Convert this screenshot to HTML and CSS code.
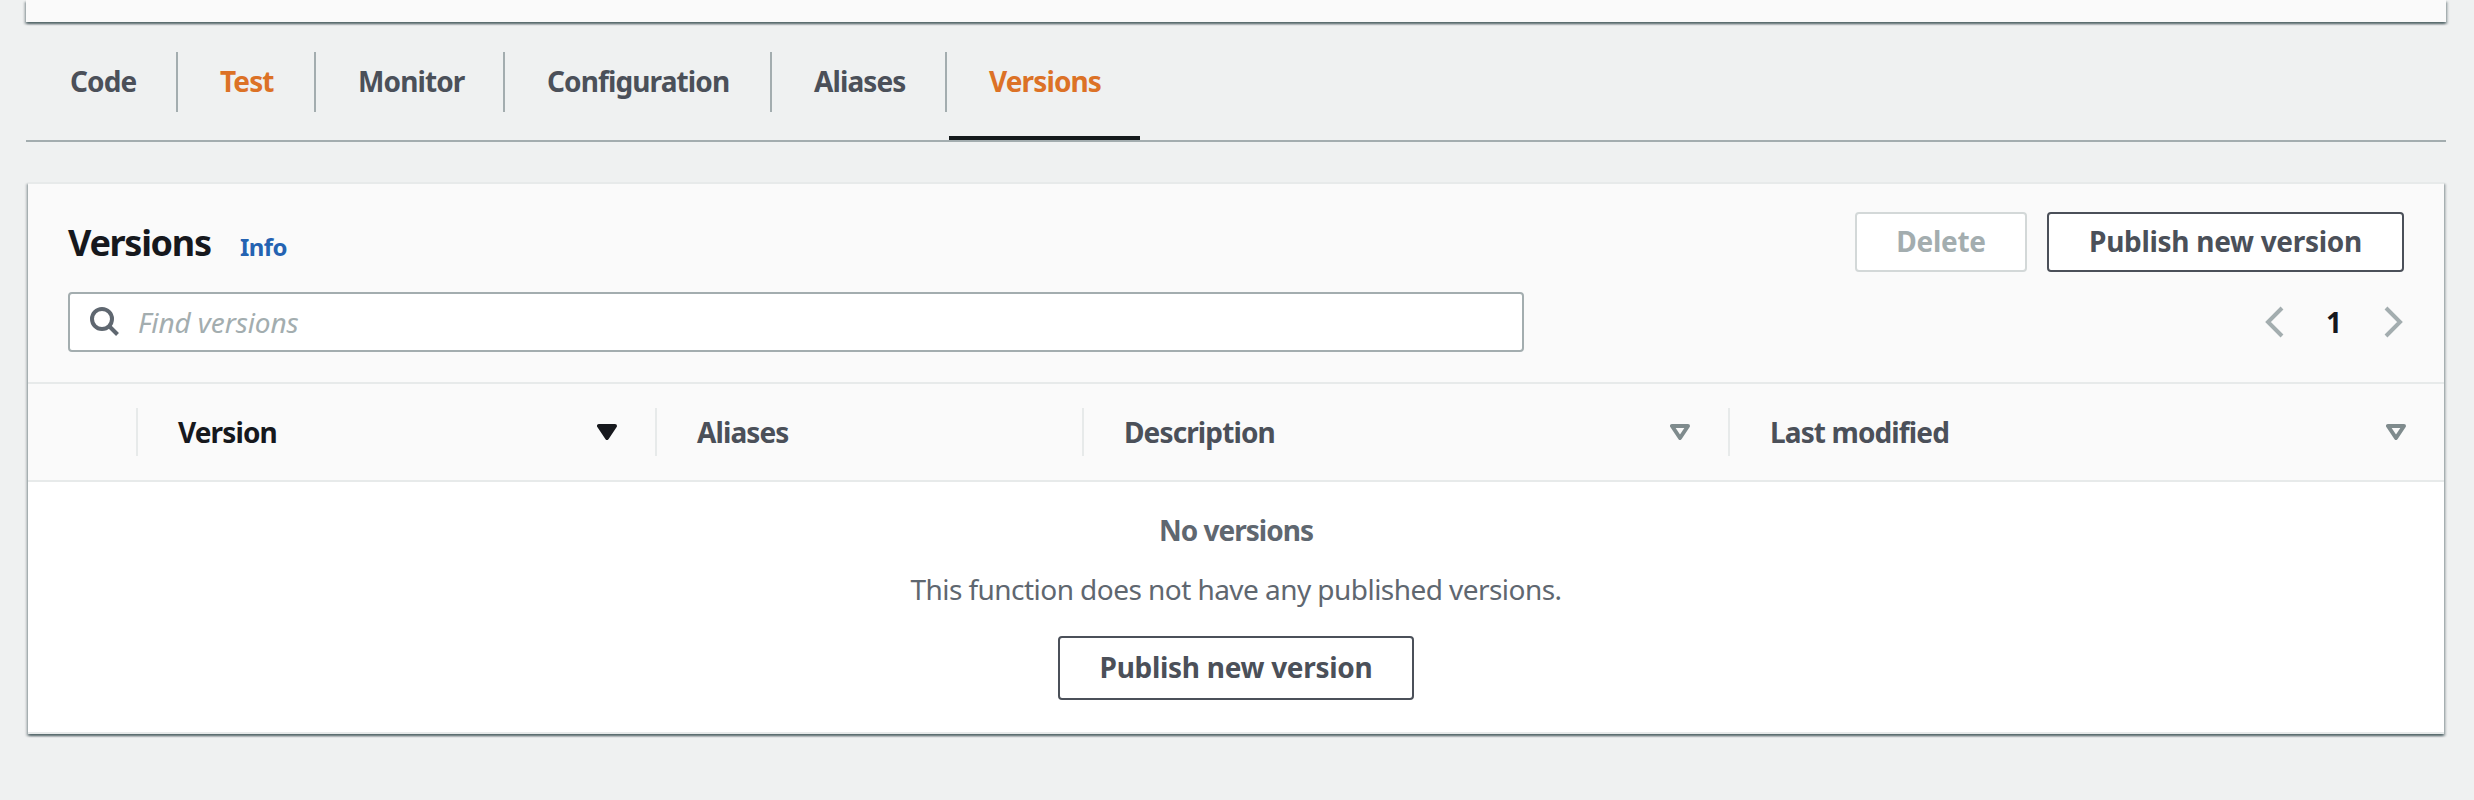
FILE: index.html
```html
<!DOCTYPE html>
<html lang="en">
<head>
<meta charset="utf-8">
<title>Versions</title>
<link rel="stylesheet" href="styles.css">
</head>
<body>
<div class="overview"></div>
<nav class="tabs">
  <a class="tab tab-code"><span>Code</span></a>
  <a class="tab tab-test"><span>Test</span></a>
  <a class="tab tab-monitor"><span>Monitor</span></a>
  <a class="tab tab-config"><span>Configuration</span></a>
  <a class="tab tab-aliases"><span>Aliases</span></a>
  <a class="tab tab-versions"><span>Versions</span></a>
</nav>
<main class="card">
  <header class="card-header">
    <div class="title-row">
      <h1>Versions</h1>
      <a class="info">Info</a>
      <div class="actions">
        <button class="btn btn-disabled">Delete</button>
        <button class="btn btn-publish">Publish new version</button>
      </div>
    </div>
    <div class="filter-row">
      <div class="search">
        <svg class="search-icon" width="32" height="32" viewBox="0 0 32 32"><circle cx="14" cy="13" r="10" fill="none" stroke="currentColor" stroke-width="4"/><path d="M21 20l8.500 8.500" fill="none" stroke="currentColor" stroke-width="4"/></svg>
        <span>Find versions</span>
      </div>
      <div class="pagination">
        <svg width="20" height="32" viewBox="0 0 20 32"><path d="M17 2L3 16l14 14" fill="none" stroke="currentColor" stroke-width="4"/></svg>
        <span class="page">1</span>
        <svg width="20" height="32" viewBox="0 0 20 32"><path d="M3 2l14 14L3 30" fill="none" stroke="currentColor" stroke-width="4"/></svg>
      </div>
    </div>
  </header>
  <div class="columns">
    <div class="col"></div>
    <div class="col col-sorted"><span>Version</span><svg class="sort" width="20" height="16" viewBox="0 0 20 16"><path d="M2 2h16l-8 12z" fill="currentColor" stroke="currentColor" stroke-width="4" stroke-linejoin="round"/></svg></div>
    <div class="col"><span>Aliases</span></div>
    <div class="col"><span>Description</span><svg class="sort" width="20" height="16" viewBox="0 0 20 16"><path d="M2 2h16l-8 12z" fill="none" stroke="currentColor" stroke-width="4" stroke-linejoin="round"/></svg></div>
    <div class="col col-last"><span>Last modified</span><svg class="sort" width="20" height="16" viewBox="0 0 20 16"><path d="M2 2h16l-8 12z" fill="none" stroke="currentColor" stroke-width="4" stroke-linejoin="round"/></svg></div>
  </div>
  <section class="empty">
    <strong>No versions</strong>
    <p>This function does not have any published versions.</p>
    <button class="btn btn-empty">Publish new version</button>
  </section>
</main>
</body>
</html>
```
FILE: styles.css
```css
* {
  box-sizing: border-box;
}

body {
  margin: 0;
  height: 800px;
  overflow: hidden;
  background: #eff1f1;
  color: #4b5059;
  font: 28px/44px "Noto Sans", sans-serif;
}

.overview {
  height: 22px;
  margin: 0 28px 0 26px;
  background: #fafafa;
}

.overview,
.card {
  box-shadow: 0 2px 2px rgba(0, 28, 36, .45), 2px 2px 2px rgba(0, 28, 36, .2), -2px 2px 2px rgba(0, 28, 36, .2);
}

/* Tab bar */
.tabs {
  display: flex;
  height: 120px;
  margin: 0 28px 40px 26px;
  padding-top: 30px;
  border-bottom: 2px solid #a3adaf;
}

.tab span {
  display: block;
  height: 60px;
  padding-left: 42px;
  border-right: 2px solid #a3adaf;
  font-weight: 700;
  line-height: 59px;
  letter-spacing: -.88px;
  white-space: nowrap;
}

.tab-code { width: 152px; }
.tab-code span { padding-left: 44px; }
.tab-test { width: 138px; }
.tab-monitor { width: 189px; }
.tab-config { width: 267px; }
.tab-aliases { width: 175px; }
.tab-versions {
  width: 191px;
  margin-left: 2px;
  border-bottom: 4px solid #151a1c;
}
.tab-versions span {
  padding-left: 40px;
  border-right: 0;
}
.tab-test,
.tab-versions {
  color: #dc7226;
}

/* Versions card */
.card {
  height: 552px;
  margin: 0 30px 0 28px;
  background: #fff;
  border-top: 2px solid #e7eaea;
  border-bottom: 2px solid #e7eaea;
}

.card-header {
  height: 200px;
  padding: 28px 40px 0;
  background: #fafafa;
  border-bottom: 2px solid #e7eaea;
}

.title-row {
  display: flex;
  height: 60px;
  align-items: baseline;
}

h1 {
  width: 172px;
  margin: 0;
  color: #16181d;
  font-size: 36px;
  line-height: 61px;
  letter-spacing: -1.3px;
}

.info {
  color: #2463b2;
  font-size: 24px;
  font-weight: 700;
  letter-spacing: -.6px;
}

.actions {
  display: flex;
  align-self: flex-start;
  gap: 20px;
  margin-left: auto;
}

.btn {
  height: 60px;
  padding: 0 0 2px;
  border: 2px solid #4b5059;
  border-radius: 4px;
  background: #fff;
  color: #4b5059;
  font: 700 28px/54px "Noto Sans", sans-serif;
  letter-spacing: -.3px;
}

.btn-disabled {
  width: 172px;
  border-color: #d3d8d8;
  color: #a3adaf;
}

.btn-publish { width: 357px; }

.filter-row {
  display: flex;
  justify-content: space-between;
  margin-top: 20px;
}

.search {
  display: flex;
  align-items: center;
  width: 1456px;
  height: 60px;
  padding-left: 18px;
  border: 2px solid #a3adaf;
  border-radius: 4px;
  background: #fff;
  color: #a3adaf;
  font-style: italic;
  letter-spacing: -.1px;
}

.search-icon {
  margin-right: 18px;
  color: #5f6770;
}

.pagination {
  display: flex;
  align-items: center;
  width: 140px;
  padding: 0 1px;
  justify-content: space-between;
  color: #a3adaf;
}

.page {
  color: #16181d;
  font-weight: 700;
  line-height: 60px;
}

.columns {
  display: grid;
  grid-template-columns: 110px 519px 427px 646px 714px;
  align-items: center;
  height: 98px;
  background: #fafafa;
  border-bottom: 2px solid #e7eaea;
}

.col {
  display: flex;
  align-items: center;
  justify-content: space-between;
  height: 48px;
  padding: 0 38px 1px 40px;
  border-right: 2px solid #e7eaea;
  font-weight: 700;
  letter-spacing: -.88px;
}

.col-last { border-right: 0; }
.col-sorted { color: #16181d; }

.sort {
  overflow: hidden;
  color: #7f8b8d;
}

.col-sorted .sort { color: #16181d; }

.empty {
  display: flex;
  flex-direction: column;
  align-items: center;
  padding-top: 26px;
  color: #5f6770;
}

.empty strong {
  letter-spacing: -1px;
}

.empty p {
  margin: 15px 0 25px;
  letter-spacing: -.55px;
}

.btn-empty {
  width: 356px;
  height: 64px;
}
```
